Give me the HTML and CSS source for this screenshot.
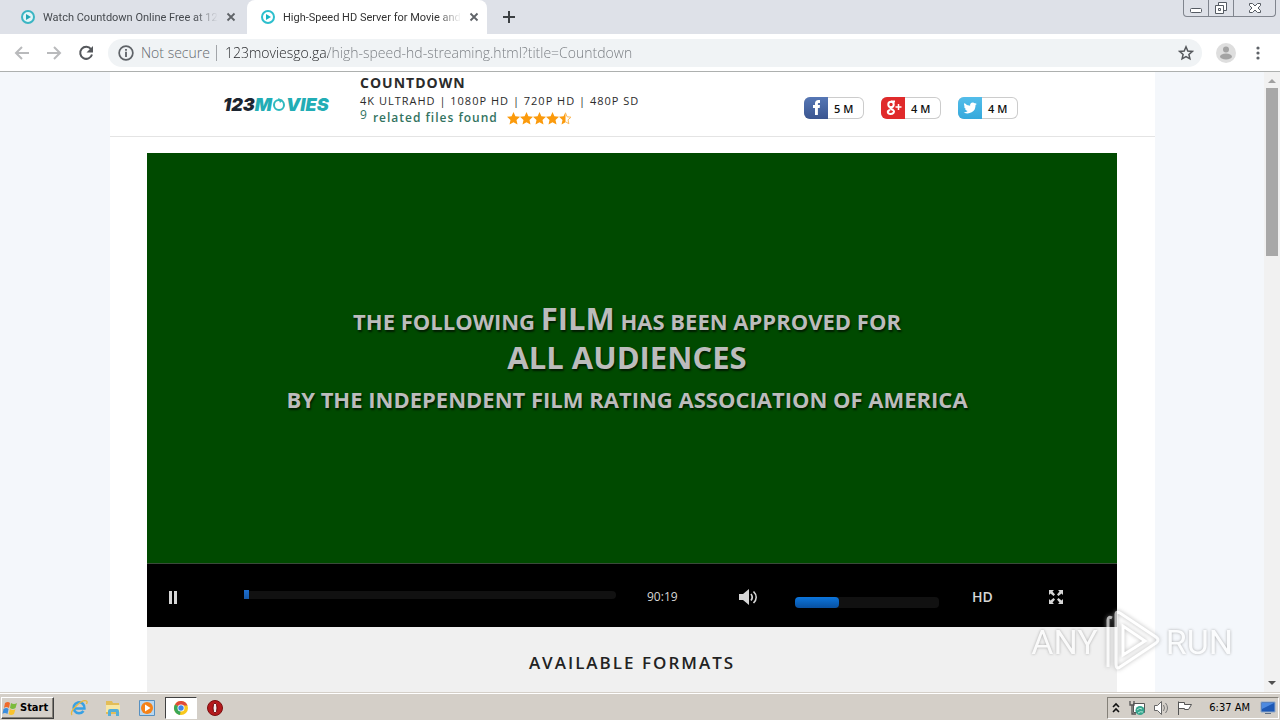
FILE: index.html
```html
<!DOCTYPE html>
<html lang="en">
<head>
	<meta charset="utf-8">
	<meta name="viewport" content="width=device-width, initial-scale=1">
	<title>High-Speed HD Server for Movie and TV</title>
	<link rel="stylesheet" href="styles.css">
</head>
<body>
<!-- browser tabs -->
<div class="tabs">
	<div class="tab">
		<svg class="favicon" viewBox="0 0 14 14"><circle cx="7" cy="7" r="6" fill="#e3f5f7" stroke="#3bb5c3" stroke-width="2"/><path d="M5 4l5 3-5 3z" fill="#22a6b5"/></svg>
		<span class="tab-title">Watch Countdown Online Free at 12</span>
		<button class="tab-close" aria-label="Close tab"><svg viewBox="0 0 10 10"><path d="M1.500 1.500l7 7M8.500 1.500l-7 7" stroke="#5f6368" stroke-width="1.800"/></svg></button>
	</div>
	<div class="tab active">
		<svg class="favicon" viewBox="0 0 14 14"><circle cx="7" cy="7" r="6" fill="#fff" stroke="#2dbfcd" stroke-width="2"/><path d="M5 4l5 3-5 3z" fill="#16b4c4"/></svg>
		<span class="tab-title">High-Speed HD Server for Movie and</span>
		<button class="tab-close" aria-label="Close tab"><svg viewBox="0 0 10 10"><path d="M1.500 1.500l7 7M8.500 1.500l-7 7" stroke="#5f6368" stroke-width="1.800"/></svg></button>
	</div>
	<button class="new-tab" aria-label="New tab"><svg viewBox="0 0 12 12"><path d="M6 0v12M0 6h12" stroke="#3c4043" stroke-width="2"/></svg></button>
	<div class="window-buttons">
		<button aria-label="Minimize"><svg viewBox="0 0 24 16"><rect x="6.500" y="8.500" width="11" height="4" rx="1" fill="#fff" stroke="#555b63"/></svg></button>
		<button aria-label="Restore"><svg viewBox="0 0 24 16"><path d="M9.500 2.500h8v8h-8z" fill="#fff" stroke="#555b63"/><path d="M6.500 5.500h8v8h-8z" fill="#fff" stroke="#555b63"/><path d="M9.500 8.500h2v2h-2z" fill="none" stroke="#555b63"/></svg></button>
		<button class="wide" aria-label="Close"><svg viewBox="0 0 24 16"><path d="M6.500 3.500h3l2.500 2.500 2.500-2.500h3v2l-2.500 2.500 2.500 2.500v2h-3L12 10l-2.500 2.500h-3v-2L9 8 6.500 5.500z" fill="#fff" stroke="#555b63"/></svg></button>
	</div>
</div>

<!-- address bar -->
<div class="toolbar">
	<button aria-label="Back"><svg viewBox="0 0 16 16"><path d="M15 8H2M8 2L2 8l6 6" fill="none" stroke="#b9babc" stroke-width="2"/></svg></button>
	<button aria-label="Forward"><svg viewBox="0 0 16 16"><path d="M1 8h13M8 2l6 6-6 6" fill="none" stroke="#b9babc" stroke-width="2"/></svg></button>
	<button aria-label="Reload"><svg viewBox="0 0 16 16"><path d="M13 4.200A6 6 0 1 0 14 9.500" fill="none" stroke="#55585c" stroke-width="2"/><path d="M15 1v6.500H8.500z" fill="#55585c"/></svg></button>
	<div class="omnibox">
		<svg class="info" viewBox="0 0 14 14"><circle cx="7" cy="7" r="6" fill="none" stroke="#5f6368" stroke-width="1.500"/><path d="M7 6v4.500M7 3.500v1.500" stroke="#5f6368" stroke-width="1.600"/></svg>
		<label class="secure" for="url">Not secure</label>
		<input class="url" id="url" type="text" value="123moviesgo.ga/high-speed-hd-streaming.html?title=Countdown">
		<button aria-label="Bookmark this page"><svg viewBox="0 0 16 16"><path d="M8 1.800l1.800 4.200 4.500.4-3.400 3 1 4.400L8 11.500l-3.900 2.300 1-4.400-3.400-3 4.500-.4z" fill="none" stroke="#55585c" stroke-width="1.500"/></svg></button>
	</div>
	<button class="profile" aria-label="Profile"><svg viewBox="0 0 20 20"><circle cx="10" cy="10" r="10" fill="#dedede"/><circle cx="10" cy="6.500" r="3" fill="#a3a3a3"/><ellipse cx="10" cy="13.500" rx="6" ry="3" fill="#a3a3a3"/></svg></button>
	<button aria-label="Menu"><svg viewBox="0 0 16 16"><g fill="#5f6368"><circle cx="8" cy="3" r="1.600"/><circle cx="8" cy="8" r="1.600"/><circle cx="8" cy="13" r="1.600"/></g></svg></button>
</div>

<div class="viewport">
	<main class="page">
		<header class="header">
			<a class="logo" href="#"><span>123</span>M<svg viewBox="0 0 14 14"><circle cx="7" cy="8" r="5" fill="none" stroke="#2fb9bf" stroke-width="2"/><path d="M6 1l5 2-3 3z" fill="#2fb9bf"/></svg>VIES</a>
			<div class="movie">
				<h1>COUNTDOWN</h1>
				<p class="quality">4K ULTRAHD | 1080P HD | 720P HD | 480P SD</p>
				<p class="found"><sup>9</sup> related files found
					<svg class="stars" viewBox="0 0 65 13">
						<defs><path id="star" d="M6.500 0l1.900 4.300 4.600.5-3.500 3.100 1 4.700-4-2.400-4 2.400 1-4.700L0 4.800l4.600-.5z"/></defs>
						<g fill="#fb9a0c"><use href="#star"/><use href="#star" x="13"/><use href="#star" x="26"/><use href="#star" x="39"/></g>
						<path d="M58.500 0v10.200l-4 2.400 1-4.700L52 4.800l4.600-.5z" fill="#fb9a0c"/>
						<path d="M58.500 1l1.600 3.800 3.900.4-3 2.600.9 4-3.400-2.100" fill="none" stroke="#fbb95a"/>
					</svg>
				</p>
			</div>
			<nav class="social">
				<a href="#"><span class="brand facebook"><svg viewBox="0 0 24 22"><path d="M11 18v-7H9V8h2V6.500C11 4.200 12.300 3 14.400 3H16v3h-1.200c-.7 0-.9.400-.9 1V8H16l-.3 3h-1.800v7z" fill="#fff"/></svg></span>5 M</a>
				<a href="#"><span class="brand google"><svg viewBox="0 0 24 22"><g fill="none" stroke="#fff" stroke-width="2"><circle cx="10" cy="7.500" r="2.700"/><path d="M14 4.500h-4M10 10.500c-1.500 1 1 1.800 2 2.500 2.500 2-.2 4-2.500 4-3 0-4-3-.3-4"/><path d="M17.500 7v6M14.500 10h6" stroke-width="1.500"/></g></svg></span>4 M</a>
				<a href="#"><span class="brand twitter"><svg viewBox="0 0 24 24"><path d="M19.500 7.300c-.5.300-1.100.4-1.700.5.600-.4 1-1 1.300-1.600-.6.300-1.200.6-1.900.7a3 3 0 0 0-5.100 2.700A8.500 8.500 0 0 1 6 6.500a3 3 0 0 0 .9 4c-.5 0-.9-.2-1.300-.4 0 1.500 1 2.700 2.400 3-.4.100-.9.100-1.300 0 .4 1.200 1.500 2 2.800 2.100A6 6 0 0 1 5 16.500a8.500 8.500 0 0 0 13-7.600c.6-.4 1.100-1 1.500-1.600z" fill="#fff"/></svg></span>4 M</a>
			</nav>
		</header>

		<section class="player">
			<div class="screen">
				<p>THE FOLLOWING <b>FILM</b> HAS BEEN APPROVED FOR</p>
				<p><b>ALL AUDIENCES</b></p>
				<p>BY THE INDEPENDENT FILM RATING ASSOCIATION OF AMERICA</p>
			</div>
			<div class="controls">
				<button aria-label="Pause"><svg width="16" height="16" viewBox="0 0 16 16"><path d="M1 2h3v13H1zM6 2h3v13H6z" fill="#d6d6d6"/></svg></button>
				<input class="seek" type="range" min="0" max="100" value="0" aria-label="Seek">
				<span class="time">90:19</span>
				<button aria-label="Mute"><svg width="20" height="18" viewBox="0 0 20 18"><path d="M1 6h4l6-5v16l-6-5H1z" fill="#d6d6d6"/><path d="M13 6c1.500 2 1.500 4.500 0 6.500M15.500 3.500c3.500 3.500 3.500 8 0 11.500" fill="none" stroke="#d6d6d6" stroke-width="1.700"/></svg></button>
				<input class="volume" type="range" min="0" max="100" value="24" aria-label="Volume">
				<button class="hd">HD</button>
				<button aria-label="Full screen"><svg width="16" height="16" viewBox="0 0 16 16"><path d="M1 1h5L4.500 2.500 7 5.500 5.500 7l-3-2.500L1 6zM15 1v5l-1.500-1.500-3 2.500L9 5.500l2.500-3L10 1zM1 15v-5l1.500 1.500 3-2.500L7 10.500l-2.500 3L6 15zM15 15h-5l1.500-1.500-2.500-3L10.500 9l3 2.500L15 10z" fill="#d6d6d6"/></svg></button>
			</div>
		</section>

		<section class="formats">
			<h2>AVAILABLE FORMATS</h2>
		</section>
	</main>
	<div class="scrollbar">
		<svg viewBox="0 0 16 16"><path d="M4 11l4-4 4 4z" fill="#a0a0a0"/></svg>
		<div class="thumb"></div>
		<svg viewBox="0 0 16 16"><path d="M4 5h8l-4 4z" fill="#505050"/></svg>
	</div>
	<div class="watermark">
		<span>ANY</span>
		<svg viewBox="0 0 60 64"><path d="M6 57V10q0-4 4-2M14 54V4q0-3 4-1l36 24q4 3 0 6L18 57q-4 3-4-3zM21 16v29l22-14z"/></svg>
		<span>RUN</span>
	</div>
</div>

<footer class="taskbar">
	<button class="start"><svg viewBox="0 0 16 16"><path d="M3 3q3-2 5 0L7 8Q4 6 2 8z" fill="#ef6a2b"/><path d="M9 3q3 2 6 0l-1.500 5q-3 2-5.500 0z" fill="#7bbb3c"/><path d="M1.500 9q3-2 5 0l-1 5q-3-2-5 0z" fill="#3b8ede"/><path d="M8 9q3 2 5.500 0L12 14q-3 2-5.500 0z" fill="#f9c32e"/></svg>Start</button>
	<button class="app" aria-label="Internet Explorer"><svg viewBox="0 0 18 18"><path d="M13.500 12A5.500 5.500 0 1 1 14.500 9.500H5" fill="none" stroke="#38a1e4" stroke-width="2.500"/><path d="M2 16C-1 12 12 0 16.500 2c1 .5.500 2 0 3" fill="none" stroke="#e9b83c" stroke-width="1.300"/></svg></button>
	<button class="app" aria-label="Explorer"><svg viewBox="0 0 18 18"><path d="M2 2h6l1 2h6v11H2z" fill="#e3bd58"/><path d="M2 6h14v7H2z" fill="#f8e7a4"/><path d="M4 17v-5q0-2 2-2h7q2 0 2 2v5h-3v-4H7v4z" fill="#55afd8"/></svg></button>
	<button class="app" aria-label="Media Player"><svg viewBox="0 0 18 18"><path d="M1.500 1.500h15v15h-15z" fill="#b8d7f0" stroke="#5790c0"/><circle cx="9" cy="9" r="6" fill="#f58218"/><path d="M7 5.500l5.500 3.500L7 12.500z" fill="#fff"/></svg></button>
	<button class="app pressed" aria-label="Chrome"><svg viewBox="0 0 18 18"><circle cx="9" cy="9" r="7" fill="#f9c81c"/><path d="M9 9L3 5.400A7 7 0 0 1 15.500 6.500H9z" fill="#e04a3a"/><path d="M9 9l-1 7A7 7 0 0 1 3 5.400z" fill="#3aa757"/><circle cx="9" cy="9" r="3.500" fill="#fff"/><circle cx="9" cy="9" r="2.700" fill="#4285e8"/></svg></button>
	<button class="app" aria-label="Opera"><svg viewBox="0 0 18 18"><circle cx="9" cy="9" r="7.500" fill="#b5191c" stroke="#7a0f10"/><ellipse cx="9" cy="9" rx="2" ry="5" fill="#f4eeee" stroke="#6d0a0c"/></svg></button>
	<div class="tray">
		<svg class="more" viewBox="3 0 10 16"><path d="M5 7l3-3 3 3M5 12l3-3 3 3" fill="none" stroke="#111" stroke-width="1.600"/></svg>
		<svg viewBox="0 0 16 16"><path d="M4.500 3.500h11v9h-11z" fill="#fff" stroke="#555"/><path d="M1 1v4h4V1M3 5v9h4" fill="none" stroke="#555" stroke-width="1.300"/><circle cx="11" cy="10.500" r="4.500" fill="#36a58e"/><path d="M8 10q3-3 5-1M9 13q2-2 5-1" fill="none" stroke="#b9e8d9"/></svg>
		<svg viewBox="0 0 16 16"><path d="M1.500 5.500h3l4-4v13l-4-4h-3z" fill="#fff" stroke="#666"/><path d="M10.500 5q2 3 0 6M12.500 3q4 5 0 10" fill="none" stroke="#777"/></svg>
		<svg viewBox="0 0 16 16"><path d="M1.500 15V1.500M1.500 2.500h6v2h7l-3 5h-4v-1h-6" fill="#fff" stroke="#555"/></svg>
		<span class="clock">6:37 AM</span>
		<svg viewBox="0 0 16 16"><path d="M1 2h14v10H1z" fill="#1e59b5" stroke="#8fa9c8"/><path d="M2 3h12L2 9z" fill="#4d8ae0"/><path d="M5 13h6v1H5z" fill="#5d6e84"/></svg>
	</div>
</footer>
</body>
</html>
```

FILE: styles.css
```css
* {
	box-sizing: border-box;
}
body {
	margin: 0;
	height: 100vh;
	display: flex;
	flex-direction: column;
	overflow: hidden;
	font-family: "Open Sans", "Noto Sans", sans-serif;
	color: #222;
}
h1, h2, p {
	margin: 0;
}
button {
	border: 0;
	padding: 0;
	background: none;
	font-family: inherit;
	color: inherit;
	display: flex;
	align-items: center;
}
svg {
	display: block;
	flex: none;
}
a {
	color: inherit;
	text-decoration: none;
}

/* tab strip */
.tabs {
	display: flex;
	height: 34px;
	flex: none;
	background: #dee1e8;
	padding-left: 7px;
}
.tab {
	display: flex;
	align-items: center;
	width: 240px;
	padding: 0 11px 0 14px;
	gap: 8px;
	font-family: Roboto, sans-serif;
	font-size: 11px;
	color: #45494e;
}
.tab.active {
	background: #fff;
	border-radius: 8px 8px 0 0;
	color: #333;
}
.favicon {
	width: 14px;
	height: 14px;
}
.tab-title {
	flex: 1;
	white-space: nowrap;
	-webkit-mask-image: linear-gradient(to left, transparent, #000 24px);
	mask-image: linear-gradient(to left, transparent, #000 24px);
}
.tab-close svg {
	width: 10px;
	height: 10px;
}
.new-tab {
	padding: 0 16px;
}
.new-tab svg {
	width: 12px;
	height: 12px;
}
.window-buttons {
	display: flex;
	height: 17px;
	margin-left: auto;
	margin-right: 4px;
	border: 1px solid #80858e;
	border-top: 0;
	border-radius: 0 0 4px 4px;
}
.window-buttons button {
	width: 25px;
	justify-content: center;
	border-right: 1px solid #80858e;
}
.window-buttons .wide {
	width: 41px;
	border: 0;
}
.window-buttons svg {
	width: 24px;
	height: 16px;
}

/* toolbar */
.toolbar {
	display: flex;
	align-items: center;
	flex: none;
	height: 38px;
	gap: 16px;
	padding: 0 14px;
	border-bottom: 1px solid #adb0af;
	background: #fff;
}
.toolbar svg {
	width: 16px;
	height: 16px;
}
.omnibox {
	display: flex;
	align-items: center;
	flex: 1;
	height: 28px;
	margin-left: -2px;
	padding: 0 8px 0 10px;
	border-radius: 14px;
	background: #f0f3f5;
	font-size: 14px;
}
.secure {
	margin: 0 8px 0 7px;
	padding-right: 6px;
	line-height: 16px;
	border-right: 1px solid #a2a5a9;
	color: #65696e;
	font-weight: 300;
}
.url {
	flex: 1;
	padding: 0;
	border: 0;
	outline: 0;
	font: 300 14px "Open Sans", sans-serif;
	/* host is darker than the path */
	color: transparent;
	background: linear-gradient(to right, #202124 103px, #75797e 103px);
	-webkit-background-clip: text;
	background-clip: text;
}
.toolbar .profile {
	margin-left: -2px;
	margin-right: -2px;
}
.profile svg {
	width: 20px;
	height: 20px;
}

/* page */
.viewport {
	position: relative;
	display: flex;
	flex: 1;
	min-height: 0;
	background: #f4f7fb;
}
.page {
	flex: 1;
	margin: 0 109px 0 110px;
	background: #fff;
	overflow: hidden;
}
.header {
	display: flex;
	height: 65px;
	padding: 0 137px 0 113px;
	border-bottom: 1px solid #e4e4e4;
}
.logo {
	display: flex;
	align-items: center;
	width: 137px;
	font-family: Inter, sans-serif;
	font-size: 18px;
	font-weight: 900;
	font-style: italic;
	color: #22adb5;
}
.logo span {
	color: #1c2530;
}
.logo svg {
	width: 14px;
	height: 14px;
}
.movie {
	color: #2b2b2b;
}
.movie h1 {
	font-size: 14px;
	line-height: 22px;
	font-weight: 700;
	letter-spacing: 1px;
}
.quality {
	font-size: 11px;
	line-height: 13px;
	font-weight: 500;
	letter-spacing: 1px;
}
.found {
	display: flex;
	align-items: center;
	font-size: 12px;
	line-height: 22px;
	font-weight: 600;
	letter-spacing: 1px;
	color: #33735f;
}
.found sup {
	font-size: 12px;
	line-height: 16px;
	font-weight: 400;
	align-self: flex-start;
	margin-right: 5px;
}
.stars {
	width: 65px;
	height: 13px;
	margin-left: 9px;
}
.social {
	display: flex;
	align-items: center;
	gap: 17px;
	margin-left: auto;
	padding-top: 8px;
}
.social a {
	display: flex;
	width: 60px;
	height: 22px;
	gap: 6px;
	border-radius: 6px;
	box-shadow: inset 0 0 0 1px #ccc;
	font-size: 11px;
	line-height: 24px;
	font-weight: 600;
	color: #111;
	overflow: hidden;
}
.brand {
	width: 24px;
}
.brand svg {
	width: 24px;
	height: 22px;
}
.facebook {
	background: linear-gradient(#5677b5, #3a5590);
}
.google {
	background: #e02a2b;
}
.twitter {
	background: linear-gradient(#53bdea, #35a9dc);
}

.player {
	margin: 16px 38px 0 37px;
}
.screen {
	display: flex;
	flex-direction: column;
	align-items: center;
	height: 411px;
	padding: 149px 10px 0 0;
	border-bottom: 1px solid #3a4a3a;
	background: #004a00;
	color: #bcbcbc;
	font-size: 22px;
	font-weight: 700;
	line-height: 39px;
	white-space: nowrap;
	text-shadow: 1px 2px 2px #001c00;
}
.screen b {
	font-size: 31px;
	line-height: 24px;
	font-weight: 700;
}
.controls {
	display: grid;
	grid-template-columns: 76px 1fr 91px 57px 177px 76px 16px;
	align-items: center;
	height: 63px;
	padding: 2px 53px 0 21px;
	background: #000;
	color: #d6d6d6;
}
.controls input {
	-webkit-appearance: none;
	appearance: none;
	margin: 0;
	background: #111 linear-gradient(#0c76dd, #0850a0) no-repeat;
}
.controls .seek {
	height: 8px;
	margin-right: 31px;
	margin-bottom: 4px;
	border-radius: 4px;
	background-size: 0;
}
.controls .volume {
	width: 144px;
	height: 11px;
	margin-top: 12px;
	border-radius: 4px;
	background-size: 26% 100%;
}
.seek::-webkit-slider-thumb {
	-webkit-appearance: none;
	width: 5px;
	height: 9px;
	background: linear-gradient(#1c6ed0, #1558a8);
}
.volume::-webkit-slider-thumb {
	-webkit-appearance: none;
	width: 12px;
	height: 11px;
	border-radius: 0 4px 4px 0;
	background: linear-gradient(#0c76dd, #0850a0);
}
.time {
	font-size: 12px;
	line-height: 16px;
}
.controls .hd {
	font-size: 14px;
	font-weight: 600;
}

.formats {
	height: 200px;
	margin: 0 38px 0 37px;
	padding-top: 24px;
	background: #f0f0f0;
	text-align: center;
}
.formats h2 {
	font-size: 17px;
	line-height: 24px;
	font-weight: 600;
	letter-spacing: 2px;
}

.scrollbar {
	display: flex;
	flex-direction: column;
	width: 16px;
	background: #f1f1f1;
}
.scrollbar svg {
	width: 16px;
	height: 16px;
}
.thumb {
	height: 168px;
	margin: 0 2px auto;
	background: #a8a8a8;
}
.watermark {
	position: absolute;
	right: 47px;
	bottom: 18px;
	display: flex;
	align-items: center;
	gap: 4px;
	font-family: Roboto, sans-serif;
	font-size: 34px;
	line-height: 64px;
	color: #fff;
	opacity: 0.7;
	text-shadow: 0 0 3px #888;
}
.watermark svg {
	width: 60px;
	height: 64px;
	fill: none;
	stroke: #fff;
	stroke-width: 3px;
	filter: drop-shadow(0 0 2px #999);
}

/* taskbar */
.taskbar {
	display: flex;
	align-items: center;
	flex: none;
	height: 28px;
	padding: 2px 1px 0;
	border-top: 1px solid #d4cfc8;
	box-shadow: inset 0 1px #fff;
	background: #d4cfc8;
	font-family: "DejaVu Sans Condensed", "DejaVu Sans", sans-serif;
	font-size: 11px;
	color: #000;
}
.start {
	width: 53px;
	height: 22px;
	gap: 2px;
	margin-right: 16px;
	border: 1px solid #404040;
	border-top-color: #fff;
	border-left-color: #fff;
	box-shadow: inset -1px -1px #848078;
	font-size: 11px;
	font-weight: 700;
}
.start svg {
	width: 16px;
	height: 16px;
}
.app {
	width: 18px;
	height: 22px;
	margin-right: 16px;
	justify-content: center;
}
.app svg {
	width: 18px;
	height: 18px;
}
.pressed {
	width: 32px;
	margin: 0 9px 0 -7px;
	border: 1px solid #404040;
	border-right-color: #fff;
	border-bottom-color: #fff;
	background: #fff;
}
.tray {
	display: flex;
	align-items: center;
	height: 22px;
	gap: 8px;
	margin-left: auto;
	padding: 0 2px 0 3px;
	border: 1px solid #848078;
	border-right-color: #fff;
	border-bottom-color: #fff;
}
.tray svg {
	width: 16px;
	height: 16px;
}
.tray .more {
	width: 10px;
}
.clock {
	margin: 0 2px 0 8px;
}
```
